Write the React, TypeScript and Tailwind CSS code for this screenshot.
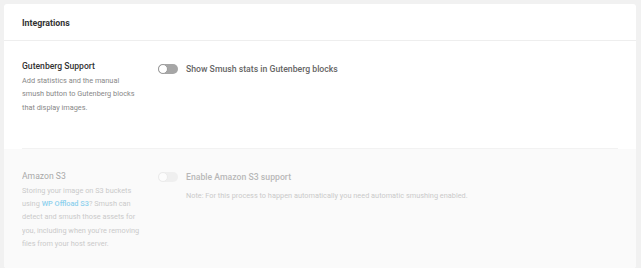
import React from "react";

function Toggle() {
  return (
    <span className="relative inline-block w-[20px] h-[10px] rounded-full bg-[#a6a6a6] shrink-0">
      <span className="absolute left-0 top-0 w-[10px] h-[10px] rounded-full bg-white border border-[#9a9a9a]" />
    </span>
  );
}

export default function App() {
  return (
    <div
      className="min-h-[268px] bg-[#f1f1f1] pl-[4px] pt-[4px] pr-[5px]"
      style={{ fontFamily: "Roboto, 'Liberation Sans', sans-serif" }}
    >
      <div className="bg-white rounded-[3px] w-[632px] min-h-[264px] flex flex-col">
        <div className="h-[37px] px-[18px] pt-[3px] flex items-center border-b border-[#eeeeee]">
          <h2 className="text-[8.8px] font-bold text-[#333333] leading-[13px]">Integrations</h2>
        </div>
        <div className="mx-[18px] pt-[19px] pb-[34px] flex border-b border-[#f2f2f2]">
          <div className="w-[136px] shrink-0">
            <div className="text-[8.6px] font-medium text-[#333333] leading-[13px] mb-[1px]">Gutenberg Support</div>
            <p className="text-[7.35px] text-[#888888] leading-[13.3px] w-[120px]">
              Add statistics and the manual smush button to Gutenberg blocks that display images.
            </p>
          </div>
          <div className="flex items-center gap-[8px] pt-[2px] h-[14px] mt-[1px]">
            <Toggle />
            <span className="text-[8.7px] font-medium text-[#666666] leading-[13px]">
              Show Smush stats in Gutenberg blocks
            </span>
          </div>
        </div>
        <div className="flex-1 bg-[#fafafa] px-[18px] pt-[21px] pb-[16px] rounded-b-[3px]">
          <div className="flex opacity-50">
            <div className="w-[136px] shrink-0">
              <div className="text-[8.6px] text-[#555555] leading-[13px] mb-[1px]">Amazon S3</div>
              <p className="text-[7.35px] text-[#999999] leading-[13.3px] w-[120px]">
                Storing your image on S3 buckets using{" "}
                <a className="text-[#17a8e3] font-medium">WP Offload S3</a>? Smush can detect and smush
                those assets for you, including when you're removing files from your host server.
              </p>
            </div>
            <div className="flex flex-col">
              <div className="flex items-center gap-[8px] h-[15px]">
                <span className="relative inline-block w-[20px] h-[10px] rounded-full bg-[#e6e6e6] shrink-0">
                  <span className="absolute left-0 top-0 w-[10px] h-[10px] rounded-full bg-white border border-[#dddddd]" />
                </span>
                <span className="text-[8.7px] font-medium text-[#777777] leading-[13px]">
                  Enable Amazon S3 support
                </span>
              </div>
              <p className="ml-[28px] mt-[5px] text-[7.35px] text-[#999999] leading-[11px]">
                Note: For this process to happen automatically you need automatic smushing enabled.
              </p>
            </div>
          </div>
        </div>
      </div>
    </div>
  );
}
